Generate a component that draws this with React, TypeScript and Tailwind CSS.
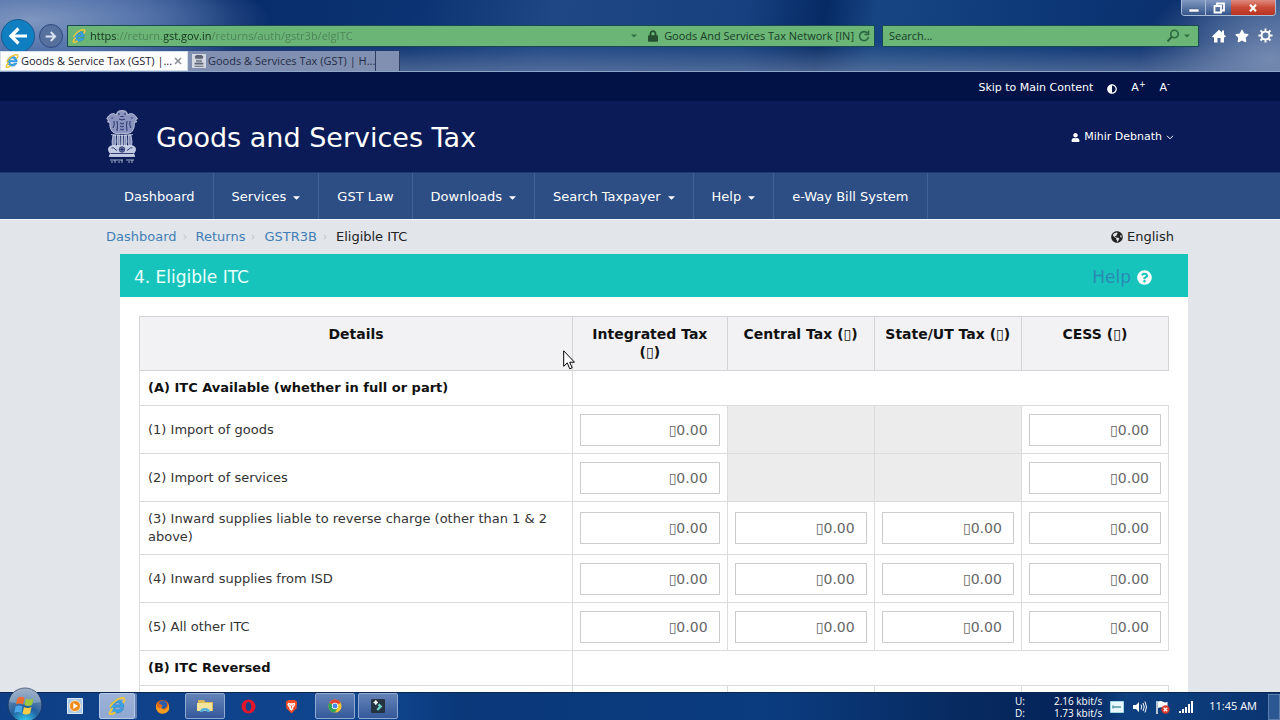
import React from "react";
import {
  FaAdjust,
  FaChevronRight,
  FaGlobeAmericas,
  FaLock,
  FaQuestionCircle,
  FaStar,
  FaUser,
} from "react-icons/fa";

type Row = { label: string; value: string; open: [boolean, boolean, boolean, boolean] };

const columns = ["Integrated Tax (▯)", "Central Tax (▯)", "State/UT Tax (▯)", "CESS (▯)"];

const available: Row[] = [
  { label: "(1) Import of goods", value: "▯0.00", open: [true, false, false, true] },
  { label: "(2) Import of services", value: "▯0.00", open: [true, false, false, true] },
  {
    label: "(3) Inward supplies liable to reverse charge (other than 1 & 2 above)",
    value: "▯0.00",
    open: [true, true, true, true],
  },
  { label: "(4) Inward supplies from ISD", value: "▯0.00", open: [true, true, true, true] },
  { label: "(5) All other ITC", value: "▯0.00", open: [true, true, true, true] },
];

const reversed: Row[] = [{ label: "", value: "", open: [true, true, true, true] }];

const menu = [
  { label: "Dashboard", caret: false },
  { label: "Services", caret: true },
  { label: "GST Law", caret: false },
  { label: "Downloads", caret: true },
  { label: "Search Taxpayer", caret: true },
  { label: "Help", caret: true },
  { label: "e-Way Bill System", caret: false },
];

function Caret({ className }: { className: string }) {
  return (
    <svg viewBox="0 0 8 4" className={className} aria-hidden="true">
      <path d="M0 0h8L4 4z" fill="currentColor" />
    </svg>
  );
}

function ExplorerIcon({ className }: { className: string }) {
  return (
    <svg viewBox="0 0 24 24" className={className} aria-hidden="true">
      <path
        d="M21 13.6H8.6c.2 2.300 1.800 3.700 4 3.700 1.600 0 2.700-.6 3.400-1.800h4.700c-1.200 3.500-4.200 5.500-8.100 5.500-5.100 0-8.600-3.300-8.600-8.300 0-5.100 3.600-8.700 8.700-8.700 5.300 0 8.600 3.700 8.300 9.600zM8.700 10.500h7.700c-.1-1.900-1.600-3.100-3.700-3.100s-3.600 1.200-4 3.100z"
        fill="#39a5e6"
        stroke="#1b6fb8"
        strokeWidth=".6"
      />
      <path
        d="M5.500 15.500C2.500 19.800 1.200 22.500 3 23c1.500.4 4-1 5.800-2.200M3.200 12.500C6 7 13.500 1.600 19 1.200c3.600-.2 3.600 2.300 1.600 6"
        fill="none"
        stroke="#efc63b"
        strokeWidth="2.600"
        strokeLinecap="round"
      />
    </svg>
  );
}

function Emblem({ className }: { className: string }) {
  return (
    <svg viewBox="0 0 32 54" className={className} role="img" aria-label="State Emblem of India">
      <g fill="#8a94be" stroke="#dfe4f4" strokeWidth=".7" strokeLinejoin="round">
        <path d="M11 2.500Q12 .5 16 .5t5 2l.5 2.500Q24 2.500 27 4t4.500 5l-2 .6 1.200 2.400-2.400.4c.4 3-.2 5.100-1.200 7.300-.8 2-2.500 3.300-5 3.800h-12c-2.500-.5-4.200-1.800-5-3.800-1-2.200-1.600-4.300-1.200-7.300l-2.400-.4L2.700 9.600l-2-.6Q2 5.500 5 4t5.500 1z" />
        <path d="M7 25h2.500l.5 7-1 4H6.500l-.5-4zM11.500 25h2l.5 11h-2.500zM18.500 25h2v11H18zM22.500 25H25l1 7-.5 4H23l-1-4zM15.300 25h1.400v11h-1.400z" />
        <path d="M2.500 39c0-2 1.800-3.300 4-3.300h19c2.200 0 4 1.300 4 3.300 0 2-.8 3.400-1.800 4.500l1 3H3.300l1-3C3.300 42.400 2.500 41 2.500 39z" fill="#c3cae4" />
      </g>
      <g fill="none" stroke="#0a1b57" strokeWidth=".8">
        <path d="M12 4h2m4 0h2M14.500 6.500h3M13 9q3 2 6 0M5.500 8H7M25 8h1.500M8 11q1 4-1 7M24 11q-1 4 1 7M11 11q1 4 0 10M21 11q-1 4 0 10M14 13q2 2 4 0M14 16q2 2 4 0M14 19q2 2 4 0" />
        <circle cx="16" cy="39.500" r="2.700" />
        <path d="M16 37v5M13.500 39.500h5M14.200 37.700l3.600 3.600M17.800 37.700l-3.600 3.600M5.500 38q2-1 3.500 1t2 1M26.500 38q-2-1-3.500 1t-2 1M4.500 43.500h23" />
      </g>
      <path d="M5 24.500q11 2 22 0" fill="none" stroke="#c9d0e8" strokeWidth=".8" />
      <g stroke="#c9d0e8" strokeWidth=".8" fill="none">
        <path d="M4 50h13M20 50h8" />
        <path d="M5 52h2M9 50v3M12 52h2M16 50v3M22 52h2M26 50v3" />
      </g>
    </svg>
  );
}

function BrowserChrome() {
  return (
    <header className="relative shrink-0 border-b border-[#8fa5c8] bg-[radial-gradient(ellipse_240px_60px_at_30px_20px,#7f97c0_0%,#5876ad_45%,transparent_100%),radial-gradient(ellipse_130px_90px_at_1270px_60px,#7389b0_0%,transparent_100%),linear-gradient(to_bottom,transparent_60%,#6f83a899_100%),linear-gradient(100deg,#3a5f9c_0%,#082d6b_18%,#0b3272_32%,#1f4785_43%,#16407f_58%,#062a64_64%,#174583_68%,#0b3575_84%,#0b2f6c_92%,#2c4f88_100%)] font-['Open_Sans',sans-serif]">
      <div className="absolute top-0 right-1 flex h-4 overflow-hidden rounded-b border border-t-0 border-[#a9bbd6] text-white">
        <button aria-label="Minimize" className="flex w-6 items-center justify-center border-r border-[#a9bbd6] bg-gradient-to-b from-[#8299c2] to-[#36558a]">
          <svg viewBox="0 0 12 12" className="size-3"><path d="M1 7h10v3H1z" fill="white" stroke="#425979" strokeWidth=".6" /></svg>
        </button>
        <button aria-label="Restore" className="flex w-[25px] items-center justify-center bg-gradient-to-b from-[#8299c2] to-[#36558a]">
          <svg viewBox="0 0 12 12" className="size-3"><path d="M4 3V1.500h7v7H9M1.500 4h6.500v6.500H1.500z" fill="none" stroke="white" strokeWidth="1.800" /></svg>
        </button>
        <button aria-label="Close" className="flex w-11 items-center justify-center bg-gradient-to-b from-[#dd8a7d] via-[#c94a36] to-[#b8321f]">
          <svg viewBox="0 0 12 12" className="size-[10px]"><path d="M2.500 2l7 8M9.500 2l-7 8" stroke="white" strokeWidth="2.600" /></svg>
        </button>
      </div>

      <div className="flex h-[51px] items-end pr-[7px] pl-px">
        <button aria-label="Back" className="-mb-[2px] flex size-[34px] shrink-0 items-center justify-center rounded-full border border-[#1c5b90] bg-[#0f7fc2]">
          <svg viewBox="0 0 20 18" className="h-[18px] w-5" fill="none" stroke="white" strokeWidth="3.200"><path d="M19 9H3M10.500 1.500L3 9l7.500 7.500" /></svg>
        </button>
        <button aria-label="Forward" className="mb-[3px] ml-1 flex size-6 shrink-0 items-center justify-center rounded-full border border-[#2d4a80] bg-[#57719f]">
          <svg viewBox="0 0 20 18" className="h-[11px] w-3" fill="none" stroke="#dbe4f2" strokeWidth="3"><path d="M1 9h16M9.500 1.500L17 9l-7.500 7.500" /></svg>
        </button>
        <div className="mb-1 ml-1 flex h-[22px] min-w-0 flex-1 items-center border border-[#174a52] bg-[#6bb576] px-1 text-[11px] text-[#163d25]">
          <ExplorerIcon className="size-[14px] shrink-0" />
          <input
            aria-label="Address"
            className="ml-1 min-w-0 flex-1 bg-[linear-gradient(to_right,#12331b_0_26px,#4d8358_26px_74px,#12331b_74px_121px,#4d8358_121px)] bg-clip-text text-transparent outline-none"
            defaultValue="https://return.gst.gov.in/returns/auth/gstr3b/elgITC"
          />
          <button aria-label="Show address history" className="mr-[11px]"><Caret className="h-1 w-[6px] text-[#2e7040]" /></button>
          <FaLock className="mr-[6px] h-3 w-[10px] shrink-0 text-[#24502f]" />
          <span className="whitespace-nowrap">Goods And Services Tax Network [IN]</span>
          <button aria-label="Refresh" className="ml-1">
            <svg viewBox="0 0 12 12" className="size-3" fill="none" stroke="#2c6840" strokeWidth="1.600"><path d="M9.500 3.200A4.500 4.500 0 1 0 10.500 7M10.500.5v4h-4" /></svg>
          </button>
        </div>
        <div className="mb-1 ml-[7px] flex h-[22px] w-[317px] items-center border border-[#174a52] bg-[#6bb576] px-[6px]">
          <input aria-label="Search" placeholder="Search..." className="min-w-0 flex-1 bg-transparent text-[11px] text-[#163d25] outline-none placeholder:text-[#163d25]" />
          <button aria-label="Run search">
            <svg viewBox="0 0 14 14" className="size-[14px]" fill="none" stroke="#2c6840" strokeWidth="1.600"><circle cx="8.500" cy="5" r="3.800" /><path d="M5.800 7.800L1.500 12.500" strokeWidth="2" /></svg>
          </button>
          <button aria-label="Search options" className="mr-[2px] ml-1"><Caret className="h-1 w-[6px] text-[#2e7040]" /></button>
        </div>
        <div className="mb-2 ml-[13px] flex items-center gap-[9px] text-white">
          <button aria-label="Home">
            <svg viewBox="0 0 14 14" className="size-[14px]" fill="white"><path d="M7 .7L0 7.400l1.200 1.200L2 7.900V13.500h3.500V9h3v4.500H12V7.900l.8.7L14 7.400l-2-1.900V1.500h-2v2z" /></svg>
          </button>
          <button aria-label="Favorites"><FaStar className="size-[14px]" /></button>
          <button aria-label="Tools">
            <svg viewBox="0 0 16 16" className="size-[15px]" fill="none" stroke="white"><circle cx="8" cy="8" r="4.200" strokeWidth="2" /><path d="M8 .5v3M8 12.500v3M.5 8h3M12.500 8h3M2.700 2.700l2.100 2.100M11.200 11.200l2.100 2.100M13.300 2.700l-2.100 2.100M4.800 11.200l-2.100 2.100" strokeWidth="2" /></svg>
          </button>
        </div>
      </div>

      <div role="tablist" className="flex h-5 text-[11px]">
        <div role="tab" aria-selected="true" className="flex w-[188px] items-center border border-[#d4ddea] bg-[#fdfdfe] pl-1 text-[#1d2230]">
          <ExplorerIcon className="mr-[2px] size-[14px] shrink-0" />
          <span className="flex-1 whitespace-nowrap">Goods &amp; Service Tax (GST) |...</span>
          <button aria-label="Close tab" className="mr-[5px]">
            <svg viewBox="0 0 8 8" className="size-2"><path d="M1 1l6 6M7 1L1 7" stroke="#8b8f97" strokeWidth="1.600" /></svg>
          </button>
        </div>
        <div role="tab" aria-selected="false" className="flex w-[188px] items-center border-r border-[#2d3d60] bg-[#8190b1] pl-1 text-[#232c45]">
          <svg viewBox="0 0 16 16" className="mr-[2px] size-[14px] shrink-0" aria-hidden="true">
            <path d="M0 0h16v16H0z" fill="#d4d8e0" />
            <path d="M5 1h6l2 2-1 2.500H4L3 3zM5 6.500h1.500v3H5zM7.300 6.500h1.400v3H7.300zM9.500 6.500H11v3H9.500zM3 10h10v2H3zM3 13.500h10v1H3z" fill="#5d6475" />
          </svg>
          <span className="whitespace-nowrap">Goods &amp; Services Tax (GST) | H...</span>
        </div>
        <button aria-label="New tab" className="w-6 border-r border-[#2d3d60] bg-[#8190b1]" />
      </div>
    </header>
  );
}

function SiteHeader() {
  return (
    <div className="text-white">
      <div className="bg-[#021247]">
        <div className="mx-auto flex h-[29px] max-w-[1068px] items-center justify-end gap-[14px] pt-1 pr-1 text-[11px]">
          <a href="#main">Skip to Main Content</a>
          <button aria-label="Contrast"><FaAdjust className="size-[10px]" /></button>
          <button>A<sup className="text-[8px]">+</sup></button>
          <button>A<sup className="text-[8px]">-</sup></button>
        </div>
      </div>
      <div className="bg-[#0a1b57]">
        <div className="mx-auto flex h-[71px] max-w-[1068px] items-center">
          <Emblem className="mr-[18px] h-[54px] w-8" />
          <h1 className="pt-1 text-[27px]">Goods and Services Tax</h1>
          <button className="ml-auto flex items-center pt-[2px] text-[11px]">
            <FaUser className="mr-1 size-[9px]" />
            Mihir Debnath
            <svg viewBox="0 0 8 5" className="ml-1 h-[5px] w-2" fill="none" stroke="white"><path d="M1 .8l3 3 3-3" /></svg>
          </button>
        </div>
      </div>
      <nav className="border-t border-[#1d3b71] bg-[#2c4e84] shadow-[0_1px_0_#f1f4f8]">
        <ul className="mx-auto flex h-[46px] max-w-[1068px] text-[13px]">
          {menu.map((item) => (
            <li key={item.label} className="flex border-r border-[#3f6197]">
              <a href="#" className="flex items-center px-[18px] pt-[2px] whitespace-nowrap">
                {item.label}
                {item.caret && <Caret className="mt-[2px] ml-[7px] h-1 w-[7px]" />}
              </a>
            </li>
          ))}
        </ul>
      </nav>
    </div>
  );
}

function Breadcrumb() {
  return (
    <div className="flex h-[35px] items-center justify-between pt-px text-[13px] text-[#222]">
      <nav aria-label="Breadcrumb" className="flex items-center">
        {["Dashboard", "Returns", "GSTR3B"].map((name) => (
          <React.Fragment key={name}>
            <a href="#" className="text-[#417eb5]">{name}</a>
            <FaChevronRight className="mr-2 ml-[5px] size-[6px] text-[#c6cacf]" />
          </React.Fragment>
        ))}
        <span>Eligible ITC</span>
      </nav>
      <button className="flex items-center"><FaGlobeAmericas className="mr-1 size-3" />English</button>
    </div>
  );
}

function SectionRow({ title }: { title: string }) {
  return (
    <tr>
      <th scope="row" className="h-[35px] border border-[#dcdcdc] px-2 text-left font-bold text-[#111]">{title}</th>
      <td colSpan={4} className="border border-[#dcdcdc] border-r-transparent" />
    </tr>
  );
}

function EntryRow({ row }: { row: Row }) {
  return (
    <tr>
      <th scope="row" className="border border-[#dcdcdc] px-2 py-2 text-left font-normal">{row.label}</th>
      {row.open.map((open, i) =>
        open ? (
          <td key={i} className="h-12 border border-[#dcdcdc] px-[7px]">
            <input
              aria-label={`${row.label} ${columns[i]}`}
              defaultValue={row.value}
              className="block h-8 w-full border border-[#ccc] bg-white px-[11px] text-right text-sm text-[#666] outline-none"
            />
          </td>
        ) : (
          <td key={i} className="border border-[#dcdcdc] bg-[#ececec]" />
        ),
      )}
    </tr>
  );
}

function ItcPanel() {
  return (
    <section className="-mr-[14px] ml-[14px] bg-white">
      <div className="flex h-[43px] items-center justify-between bg-[#17c4bb] pt-1 pr-9 pl-[14px] text-[17px]">
        <h2 className="text-[#e9fffd]">4. Eligible ITC</h2>
        <a href="#" className="flex items-center text-[#2a8ab4]">Help<FaQuestionCircle className="ml-[6px] size-[15px] text-white" /></a>
      </div>
      <div className="px-[19px] py-[19px]">
        <table className="w-full table-fixed border-collapse text-[13px] leading-[18px] text-[#333]">
          <colgroup>
            <col className="w-[42.1%]" />
            <col className="w-[15%]" />
            <col className="w-[14.3%]" />
            <col className="w-[14.3%]" />
            <col />
          </colgroup>
          <thead>
            <tr className="h-[54px] bg-[#f2f2f5] align-top text-sm leading-[18px] text-[#111]">
              {["Details", ...columns].map((name) => (
                <th key={name} scope="col" className="border border-[#d4d4d6] px-2 pt-2 pb-2 text-center font-bold">{name}</th>
              ))}
            </tr>
          </thead>
          <tbody>
            <SectionRow title="(A) ITC Available (whether in full or part)" />
            {available.map((row) => <EntryRow key={row.label} row={row} />)}
            <SectionRow title="(B) ITC Reversed" />
            {reversed.map((row) => <EntryRow key={row.label} row={row} />)}
          </tbody>
        </table>
      </div>
    </section>
  );
}

const open = "rounded-xs border border-[#8fa9d3] bg-gradient-to-b from-[#6483b8] to-[#34599a]";

function Taskbar() {
  return (
    <footer className="relative z-10 flex h-7 shrink-0 items-center border-t border-[#0a2752] bg-[linear-gradient(to_right,#0e3f86_0%,#0f468f_30%,#0a3879_36%,#0b3c80_60%,#072a60_75%,#03235a_84%,#0d4080_88%,#0a3470_100%)] font-['Open_Sans',sans-serif] text-white">
      <button aria-label="Start" className="relative -mt-1 ml-[7px] size-9 shrink-0">
        <svg viewBox="0 0 36 36" className="size-9">
          <defs>
            <radialGradient id="orb" cx=".5" cy="1" r=".95"><stop offset="0" stopColor="#35d4f5" /><stop offset=".45" stopColor="#21619f" /><stop offset="1" stopColor="#7d93b2" /></radialGradient>
          </defs>
          <circle cx="18" cy="18" r="17" fill="url(#orb)" stroke="#19355f" />
          <path d="M2.500 15a15.500 15 0 0 1 31 0Q18 19 2.500 15z" fill="white" opacity=".25" />
          <path d="M10.500 11q4-2.500 7 0l-1.500 6.500q-3.500-2-7 0z" fill="#ee6c32" />
          <path d="M19 11.500q3.500 2 7.500 0L25 18q-4 2-7.500 0z" fill="#9cc83f" />
          <path d="M8.600 19.500q3.500-2 7 0L14 26q-3.500-2-7 0z" fill="#4aa6e8" />
          <path d="M17 20q3.500 2 7.500 0L23 26.500q-4 2-7.500 0z" fill="#f7cc46" />
        </svg>
      </button>
      <div className="ml-4 flex h-full flex-1 items-center pb-px">
        <button aria-label="Media Player" className="ml-2 flex w-4 justify-center">
          <svg viewBox="0 0 16 16" className="size-4"><path d="M.5.500h15v15H.5z" fill="#a8c9e8" stroke="#dce9f5" /><circle cx="8" cy="8" r="5.500" fill="#f08b1d" stroke="#fff3df" strokeWidth=".8" /><path d="M6.300 5l4.500 3-4.500 3z" fill="white" /></svg>
        </button>
        <button aria-label="Internet Explorer" className="ml-4 flex h-[26px] w-9 items-center justify-center rounded-xs border border-[#b9cae6] bg-gradient-to-b from-[#9db2d7] to-[#8fa9d3] shadow-[2px_0_0_#5f7fb2]"><ExplorerIcon className="size-[18px]" /></button>
        <button aria-label="Firefox" className="ml-[19px] flex w-4 justify-center">
          <svg viewBox="0 0 16 16" className="size-[15px]"><circle cx="8" cy="8" r="7" fill="#e66000" /><circle cx="8.500" cy="6" r="4.500" fill="#2a5caa" /><path d="M1 6q2-1 4.500.5L8 8q-2 0-1 2 2 2 5 .5 2.500-2 1.500-6 3 5 .5 8.500-3.500 3.500-8 2.500Q.5 13.500 1 6z" fill="#f59a23" /><path d="M2 3q1 1.500 3 2L8 7 5 10 2 8z" fill="#e2681c" /></svg>
        </button>
        <button aria-label="File Explorer" className={`ml-[15px] flex h-[26px] w-10 items-center justify-center ${open}`}>
          <svg viewBox="0 0 18 16" className="h-4 w-[18px]"><path d="M2 2h6l1.500 2H17v9H2z" fill="#d8b95a" /><path d="M1 5h15v8H1z" fill="#f5e49b" /><path d="M4 14q0-4 5-4t5 4h-2.500q0-1.500-2.500-1.500T6.500 14z" fill="#58b2dd" /></svg>
        </button>
        <button aria-label="Opera" className="ml-[15px] flex w-4 justify-center">
          <svg viewBox="0 0 16 16" className="size-[15px]"><path fillRule="evenodd" d="M8 .5a7.500 7.500 0 1 1 0 15 7.500 7.500 0 0 1 0-15zm0 2.700c-1.800 0-2.900 2-2.900 4.800s1.100 4.800 2.900 4.800 2.900-2 2.900-4.800S9.800 3.200 8 3.200z" fill="#e2172c" /></svg>
        </button>
        <button aria-label="Brave" className="ml-[27px] flex w-4 justify-center">
          <svg viewBox="0 0 14 16" className="h-[15px] w-[13px]"><path d="M3.500 1h7l2.500 2-.5 7L7 15.500 1.500 10 1 3z" fill="#f04b25" /><path d="M3.500 4l2 .5h3l2-.5.500 2-2 3-.500 2L7 12.500 5 11l-.5-2-2-3z" fill="white" /><path d="M4.500 6l1.500.8M9.500 6L8 6.800M7 7v3" stroke="#f04b25" /></svg>
        </button>
        <button aria-label="Chrome" className={`ml-4 flex h-[26px] w-10 items-center justify-center ${open}`}>
          <svg viewBox="0 0 16 16" className="size-[14px]"><circle cx="8" cy="8" r="7.500" fill="#f4c430" /><path d="M8 8L1.500 4.250A7.500 7.500 0 0 1 14.500 4.250z" fill="#de4536" /><path d="M8 8L1.500 4.250A7.500 7.500 0 0 0 8 15.500l3.200-5.600z" fill="#31a354" /><circle cx="8" cy="8" r="3.600" fill="white" /><circle cx="8" cy="8" r="2.800" fill="#4587ee" /></svg>
        </button>
        <button aria-label="Filmora" className={`ml-[3px] flex h-[26px] w-10 items-center justify-center ${open}`}>
          <svg viewBox="0 0 16 16" className="size-[14px]"><rect width="16" height="16" rx="1.500" fill="#25323f" /><path d="M5.500 1.500q.3 2.200 2.500 2.500-2.200.3-2.500 2.500Q5.200 4.300 3 4q2.200-.3 2.500-2.500z" fill="white" stroke="white" /><path d="M9.500 5L13 8.500l-5 5L6.200 11.700 9 8.500 7.500 7z" fill="#6fd0c5" /></svg>
        </button>
      </div>
      <dl className="grid grid-cols-[39px_auto] text-[10px] leading-[12px] whitespace-nowrap">
        <dt>U:</dt><dd>2.16 kbit/s</dd>
        <dt>D:</dt><dd>1.73 kbit/s</dd>
      </dl>
      <div className="ml-2 flex items-center gap-[9px]">
        <svg viewBox="0 0 14 12" className="h-3 w-[14px]"><path d="M.5.500h13v11H.5z" fill="#e8f7fa" stroke="#9ddbe6" /><path d="M3 6h8M3 4.500v3" stroke="#4e9aa9" strokeWidth="1.400" /></svg>
        <svg viewBox="0 0 14 14" className="size-[14px]" fill="none" stroke="white"><path d="M0 5h3l3-3v10L3 9H0z" fill="white" stroke="none" /><path d="M8 4.500q1.500 2.500 0 5M10 3q2.500 4 0 8M12 1.500q3 5.500 0 11" /></svg>
        <svg viewBox="0 0 14 14" className="size-[14px]"><path d="M1 1v13" stroke="white" strokeWidth="1.400" /><path d="M2 1.500q3-1 5 .3t4.500 0V8Q9 9 7 7.800T2 8z" fill="white" /><circle cx="9.500" cy="9.500" r="4.200" fill="#d93a2b" /><path d="M7.800 7.800l3.400 3.400M11.200 7.800l-3.400 3.400" stroke="white" strokeWidth="1.300" /></svg>
        <svg viewBox="0 0 14 12" className="h-3 w-[14px]" fill="white"><path d="M0 10h2v2H0zM3 8h2v4H3zM6 6h2v6H6zM9 3h2v9H9zM12 0h2v12h-2z" /></svg>
      </div>
      <time className="ml-4 text-[11px] whitespace-nowrap">11:45 AM</time>
      <button aria-label="Show desktop" className="ml-[11px] h-[26px] w-3 border border-[#5d7fae] bg-[#2d5792]" />
    </footer>
  );
}

export default function App() {
  return (
    <div className="relative flex h-screen flex-col overflow-hidden bg-[#e2e6eb] font-['DejaVu_Sans',Verdana,sans-serif]">
      <BrowserChrome />
      <main id="main" className="min-h-0 flex-1 overflow-hidden">
        <SiteHeader />
        <div className="mx-auto max-w-[1068px]">
          <Breadcrumb />
          <ItcPanel />
        </div>
      </main>
      <Taskbar />
      <svg viewBox="0 0 12 20" className="pointer-events-none absolute top-[350px] left-[563px] z-20 h-5 w-3" aria-hidden="true">
        <path d="M.7.800v15.500l3.600-3.400 2.400 5.900 2.500-1-2.500-5.600h4.800z" fill="white" stroke="black" />
      </svg>
    </div>
  );
}
